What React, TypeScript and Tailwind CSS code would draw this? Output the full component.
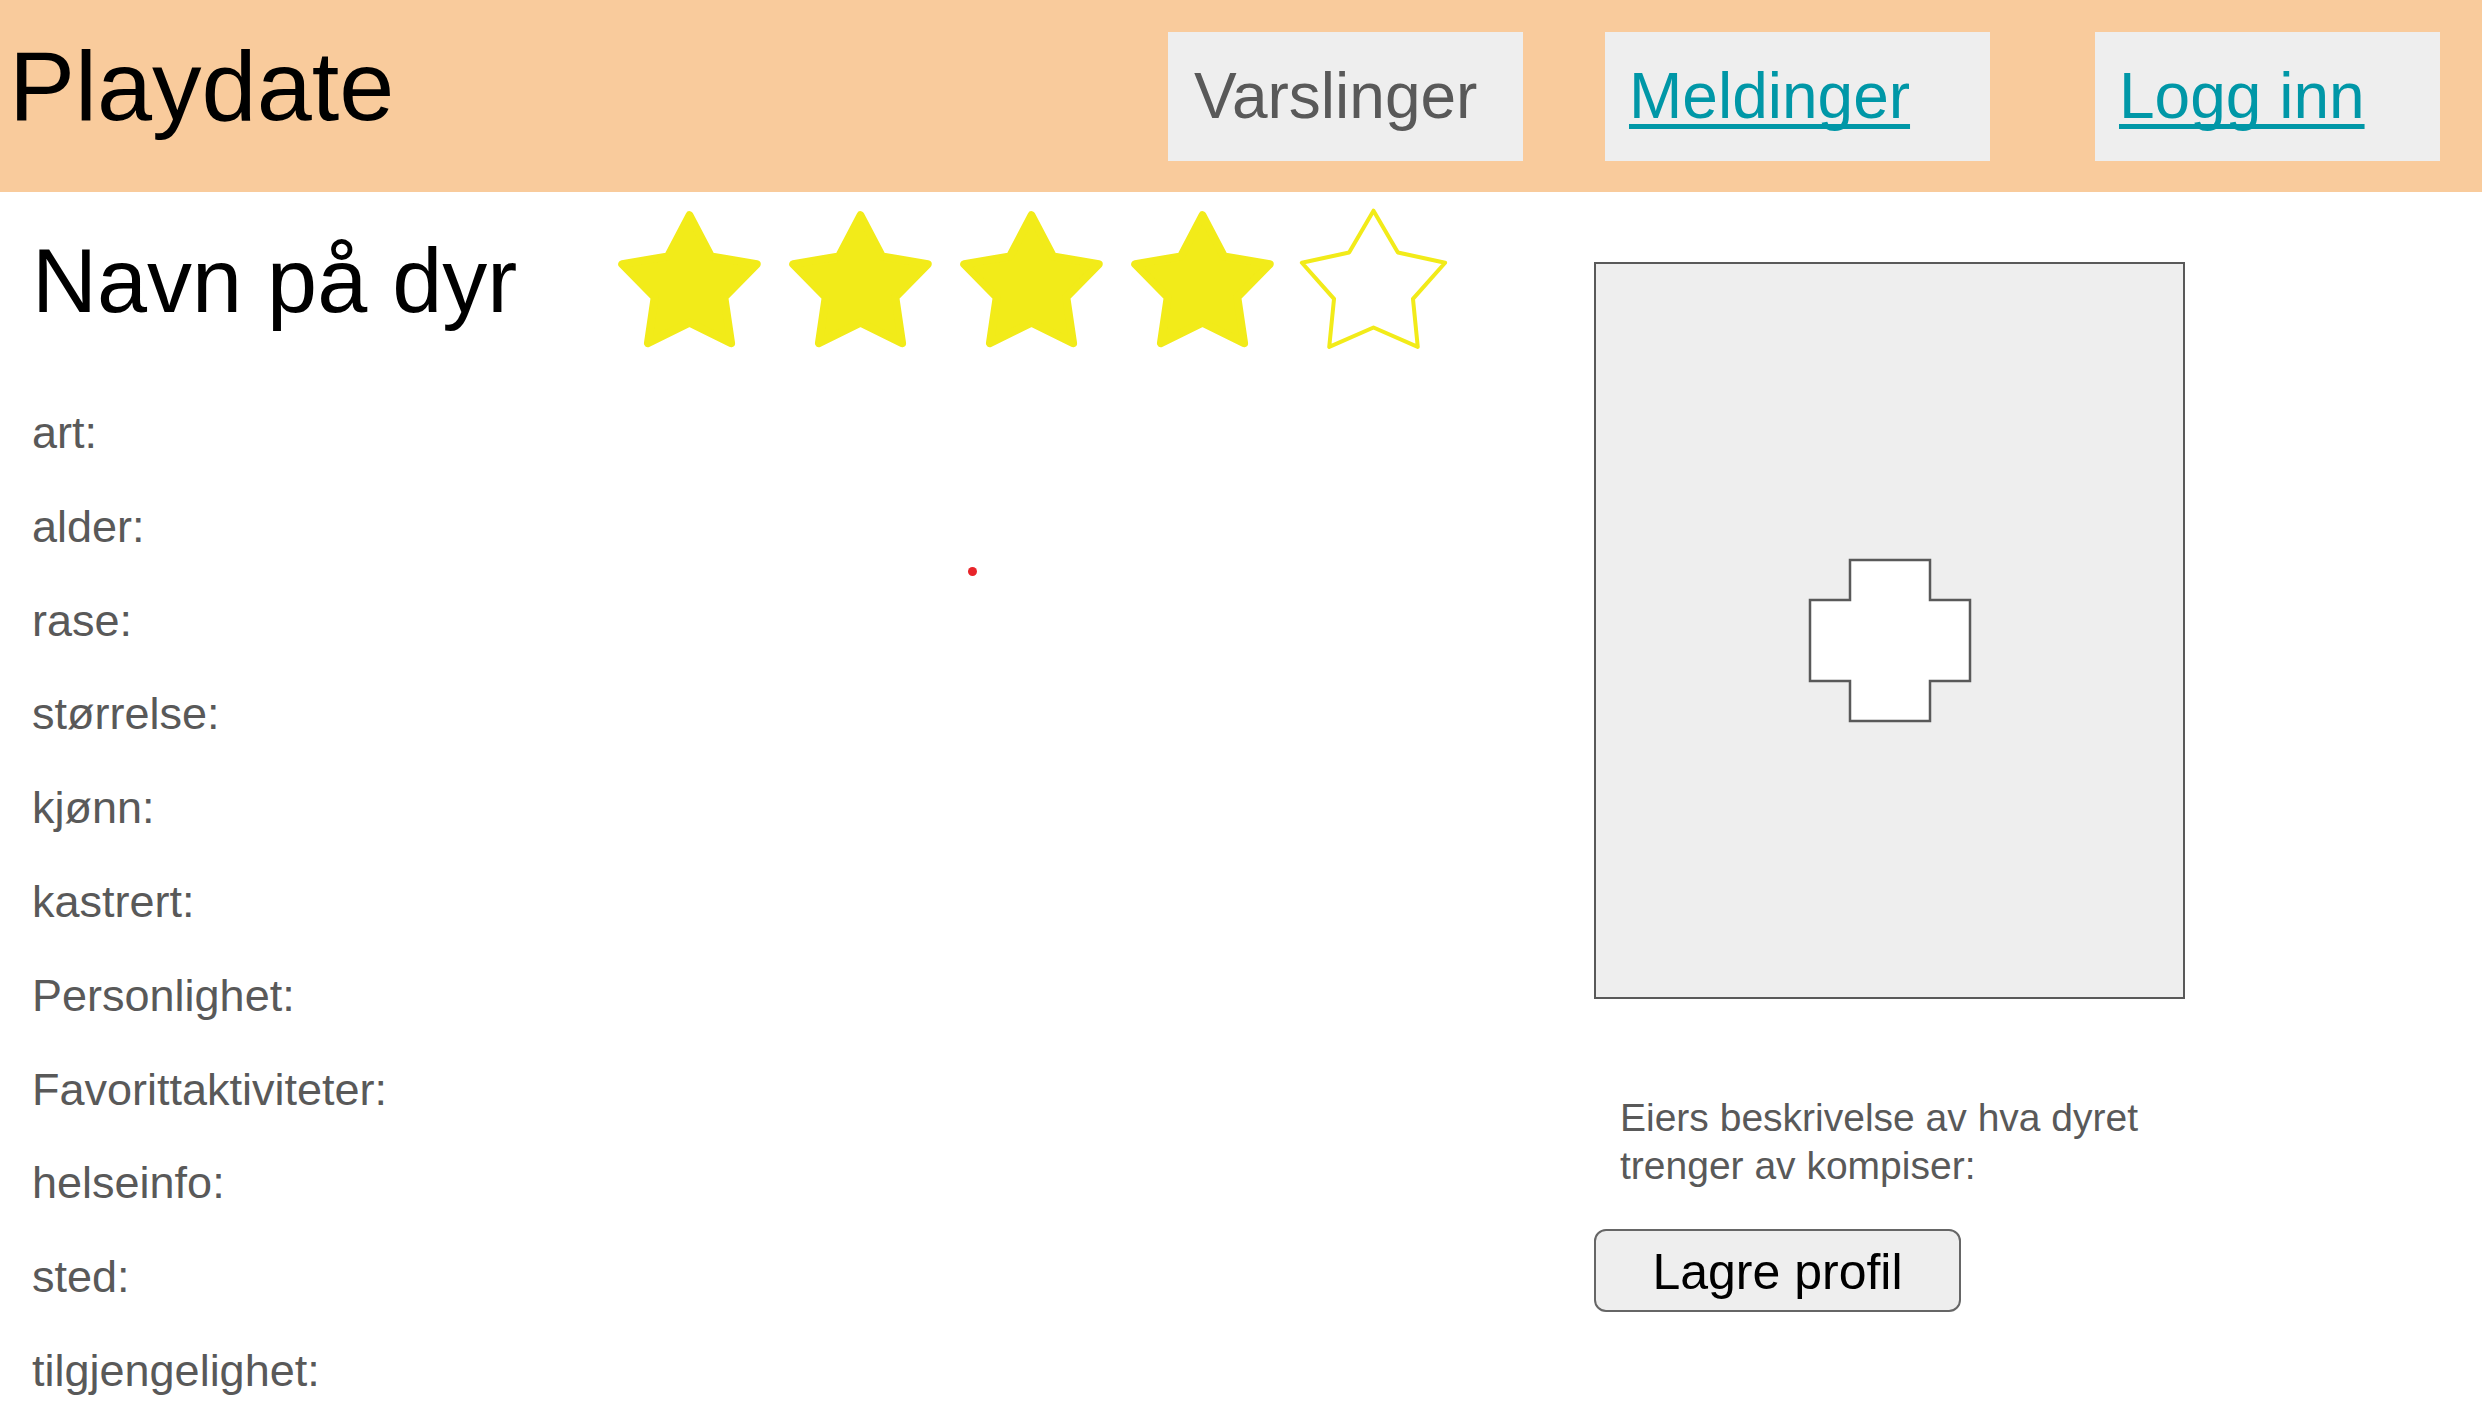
import React from "react";

function starPoints(cx: number, cy: number, R: number, r: number): string {
  const pts: string[] = [];
  for (let i = 0; i < 10; i++) {
    const ang = ((-90 + 36 * i) * Math.PI) / 180;
    const rad = i % 2 === 0 ? R : r;
    pts.push(`${(cx + rad * Math.cos(ang)).toFixed(2)},${(cy + rad * Math.sin(ang)).toFixed(2)}`);
  }
  return pts.join(" ");
}

function Star({ filled }: { filled: boolean }) {
  return (
    <svg width="171" height="154" viewBox="0 0 171 154" className="block shrink-0">
      {filled ? (
        <polygon
          points={starPoints(85.5, 78, 70.7, 36.6)}
          fill="#f2eb19"
          stroke="#f2eb19"
          strokeWidth="8"
          strokeLinejoin="round"
        />
      ) : (
        <polygon
          points={starPoints(85.5, 78, 75.3, 41.5)}
          fill="none"
          stroke="#f2eb19"
          strokeWidth="4"
          strokeLinejoin="round"
        />
      )}
    </svg>
  );
}

const labels = [
  "art:",
  "alder:",
  "rase:",
  "størrelse:",
  "kjønn:",
  "kastrert:",
  "Personlighet:",
  "Favorittaktiviteter:",
  "helseinfo:",
  "sted:",
  "tilgjengelighet:",
];

export default function App() {
  return (
    <div className="relative w-[2482px] h-[1412px] overflow-hidden bg-white font-['Liberation_Sans',Arial,sans-serif]">
      {/* Header */}
      <header className="flex items-start h-[192px] bg-[#f9cb9c] pr-[42px]">
        <div className="pl-[9px] pt-[36px] text-[99px] leading-none text-black">Playdate</div>
        <nav className="ml-auto mt-[32px] flex">
          <div className="w-[355px] h-[129px] bg-[#eeeeee] pl-[26px] pt-[32px] text-[64px] leading-none text-[#595959]">
            Varslinger
          </div>
          <div className="ml-[82px] w-[385px] h-[129px] bg-[#eeeeee] pl-[24px] pt-[32px] text-[64px] leading-none">
            <a
              href="#"
              className="text-[#0097a7] underline decoration-[5px] underline-offset-[6px] [text-decoration-skip-ink:none]"
            >
              Meldinger
            </a>
          </div>
          <div className="ml-[105px] w-[345px] h-[129px] bg-[#eeeeee] pl-[24px] pt-[32px] text-[64px] leading-none">
            <a
              href="#"
              className="text-[#0097a7] underline decoration-[5px] underline-offset-[6px] [text-decoration-skip-ink:none]"
            >
              Logg inn
            </a>
          </div>
        </nav>
      </header>

      {/* Main */}
      <main className="flex">
        <section className="w-[1594px] shrink-0 pl-[32px] flex flex-col">
          <div className="mt-[16px] flex items-start">
            <h1 className="w-[572px] shrink-0 mt-[28px] text-[90px] leading-none text-black font-normal">
              Navn på dyr
            </h1>
            <div className="flex">
              <Star filled />
              <Star filled />
              <Star filled />
              <Star filled />
              <Star filled={false} />
            </div>
          </div>
          <ul className="mt-[24px] flex flex-col">
            {labels.map((l) => (
              <li key={l} className="h-[93.8px] text-[45px] leading-[93.8px] text-[#595959]">
                {l}
              </li>
            ))}
          </ul>
        </section>

        <section className="w-[591px] shrink-0 flex flex-col">
          <div className="mt-[70px] w-[591px] h-[737px] shrink-0 border-2 border-[#595959] bg-[#eeeeee] flex items-center justify-center">
            <svg width="164" height="165" viewBox="-2 -2 164 165" className="mt-[20px] block">
              <polygon
                points="40,0 120,0 120,40 160,40 160,121 120,121 120,161 40,161 40,121 0,121 0,40 40,40"
                fill="#ffffff"
                stroke="#595959"
                strokeWidth="2.5"
              />
            </svg>
          </div>
          <p className="mt-[95px] px-[26px] text-[39px] leading-[48.3px] text-[#595959]">
            Eiers beskrivelse av hva dyret trenger av kompiser:
          </p>
          <button className="mt-[38px] w-[367px] h-[83px] shrink-0 rounded-[12px] border-2 border-[#666666] bg-[#eeeeee] flex items-center justify-center pt-[4px] text-[50px] leading-none text-black">
            Lagre profil
          </button>
        </section>
      </main>

      {/* stray red dot */}
      <div className="absolute left-[968px] top-[567px] w-[9px] h-[9px] rounded-full bg-[#e8242a]" />
    </div>
  );
}
